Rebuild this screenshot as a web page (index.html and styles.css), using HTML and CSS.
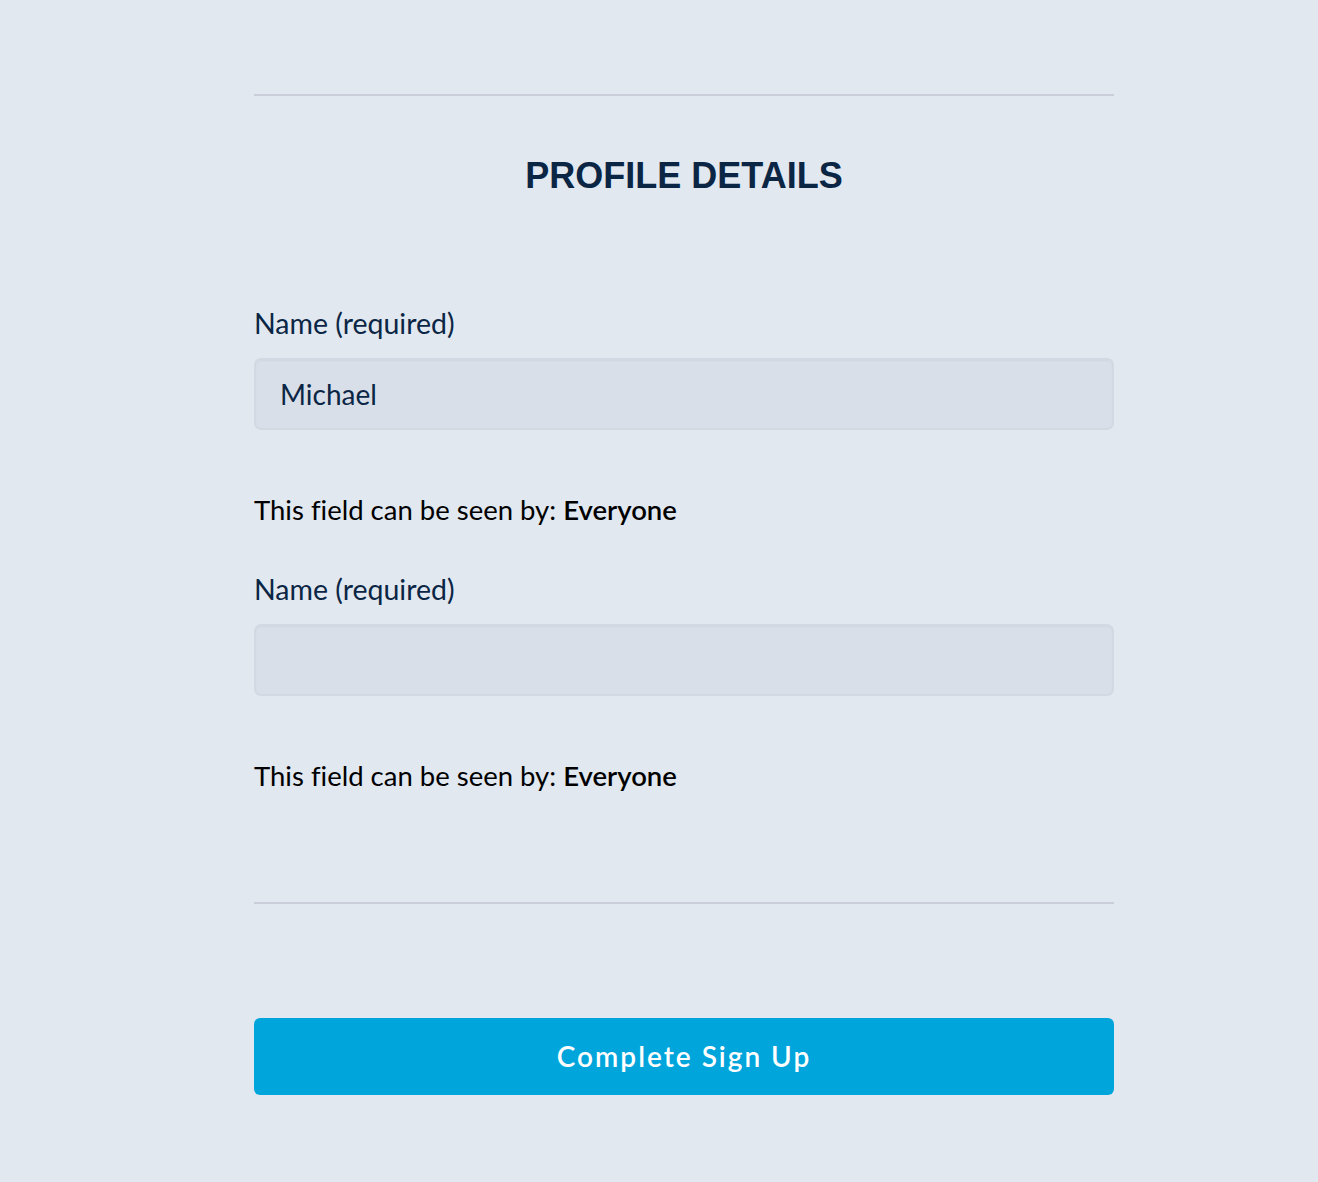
FILE: index.html
```html
<!DOCTYPE html>
<html lang="en">
<head>
<meta charset="utf-8">
<title>Profile Details</title>
<link rel="stylesheet" href="styles.css">
</head>
<body>
<main class="page">
  <hr class="rule">
  <h2 class="title">PROFILE DETAILS</h2>
  <div class="field">
    <label class="label" for="n1">Name (required)</label>
    <input class="input" id="n1" type="text" value="Michael">
    <p class="help">This field can be seen by: <strong>Everyone</strong></p>
  </div>
  <div class="field field-next">
    <label class="label" for="n2">Name (required)</label>
    <input class="input" id="n2" type="text" value="">
    <p class="help">This field can be seen by: <strong>Everyone</strong></p>
  </div>
  <hr class="rule rule-bottom">
  <button class="submit" type="button">Complete Sign Up</button>
</main>
</body>
</html>
```
FILE: styles.css
```css
html, body {
  margin: 0;
  padding: 0;
  background: #e1e8f0;
}
body {
  font-family: Lato, "Open Sans", sans-serif;
  font-variant-ligatures: none;
}
.page {
  width: 860px;
  margin-left: 254px;
  padding-top: 94px;
  padding-bottom: 80px;
  display: flex;
  flex-direction: column;
}
.rule {
  margin: 0;
  border: 0;
  height: 2px;
  background: #c9ced9;
}
.title {
  margin: 58px 0 0;
  font-family: "Liberation Sans", Arial, sans-serif;
  font-weight: 700;
  font-size: 36px;
  line-height: 43px;
  text-align: center;
  color: #0b2545;
}
.field {
  display: flex;
  flex-direction: column;
  margin-top: 107px;
}
.field-next {
  margin-top: 41px;
}
.label {
  font-size: 28.5px;
  line-height: 39px;
  color: #0b2545;
}
.input {
  margin-top: 14.5px;
  box-sizing: border-box;
  height: 72px;
  width: 100%;
  border: 2px solid #d3d9e2;
  border-radius: 7px;
  background: #d8dfe8;
  box-shadow: inset 0 1px 2px rgba(0, 0, 0, 0.04);
  padding: 0 24px;
  font-family: Lato, "Open Sans", sans-serif;
  font-size: 28px;
  color: #0b2545;
  outline: none;
}
.help {
  margin: 60.5px 0 0;
  font-size: 27.5px;
  line-height: 39px;
  color: #000;
}
.help strong {
  font-weight: 600;
}
.rule-bottom {
  margin-top: 106.5px;
}
.submit {
  margin-top: 114px;
  height: 77px;
  border: 0;
  border-radius: 6px;
  background: #00a5dc;
  color: #fff;
  font-family: Lato, "Open Sans", sans-serif;
  font-size: 28px;
  font-weight: 600;
  letter-spacing: 2px;
  cursor: pointer;
}
```
